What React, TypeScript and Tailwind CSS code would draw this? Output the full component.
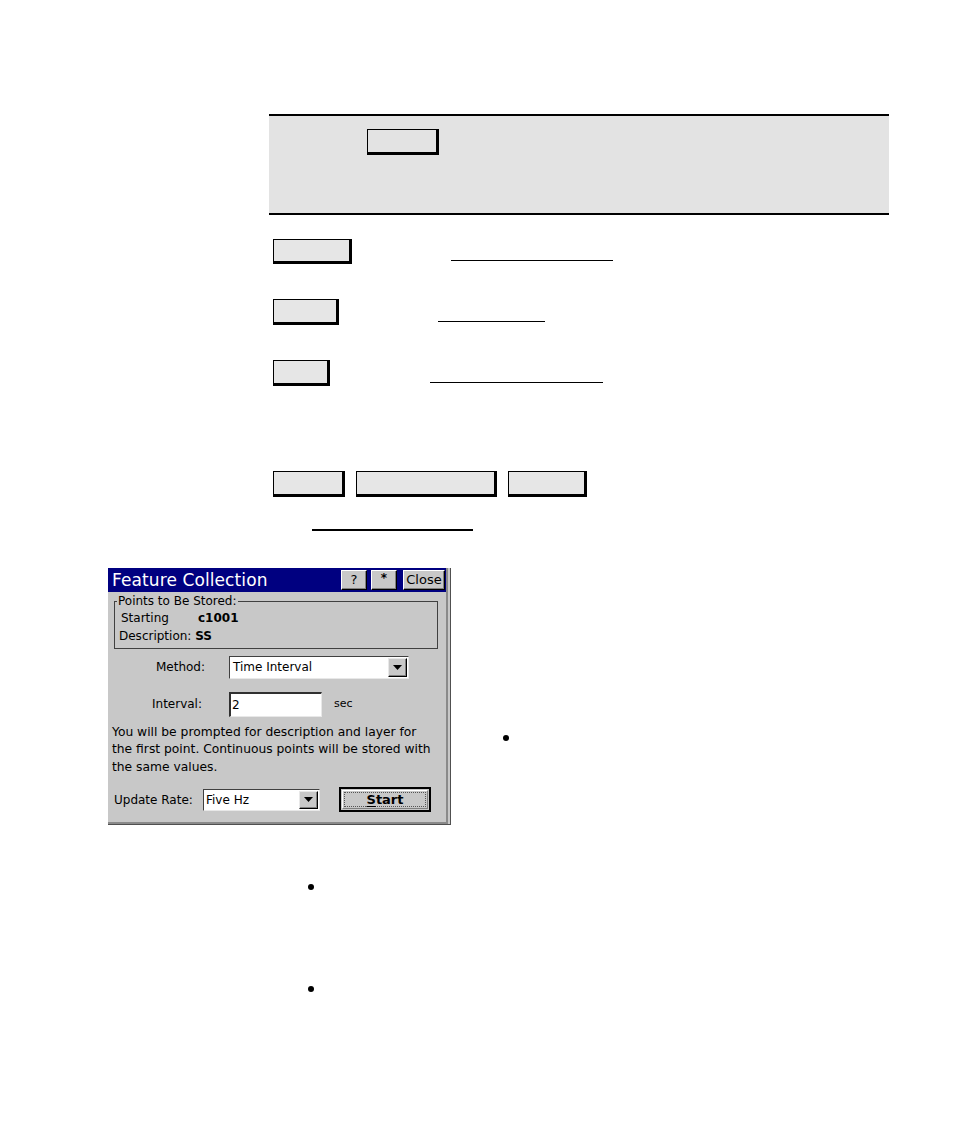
import React from "react";

const ui = { fontFamily: '"DejaVu Sans", Verdana, sans-serif' };

function DropBtn() {
  return (
    <div className="h-full w-[19px] bg-[#c8c8c8] border-t border-l border-t-[#e8e8e8] border-l-[#e8e8e8] border-r border-b border-r-black border-b-black shadow-[inset_-1px_-1px_0_#808080] flex items-center justify-center">
      <svg width="9" height="5" viewBox="0 0 9 5">
        <polygon points="0,0 9,0 4.5,5" fill="#000" />
      </svg>
    </div>
  );
}

function TitleBtn({ children, w }: { children: React.ReactNode; w: string }) {
  return (
    <div
      className={
        "h-[20px] bg-[#c8c8c8] border-t border-l border-t-white border-l-white border-r border-b border-r-black border-b-black shadow-[inset_-1px_-1px_0_#808080] flex items-center justify-center text-[13px] text-black " +
        w
      }
    >
      {children}
    </div>
  );
}

export default function App() {
  return (
    <div className="w-[954px] h-[1144px] bg-white overflow-hidden" style={ui}>
      <div className="pt-[114px]">
        {/* Note box */}
        <div className="ml-[269px] w-[620px] h-[101px] border-y-2 border-black bg-[#e3e3e3] pt-[13px] pl-[98px]">
          <div className="w-[72px] h-[26px] bg-[#e3e3e3] border-l border-t border-black border-r-[3px] border-b-[3px]" />
        </div>

        {/* Row 1 */}
        <div className="flex items-end mt-[24px] ml-[273px]">
          <div className="w-[79px] h-[25px] bg-[#e6e6e6] border-l border-t border-black border-r-[3px] border-b-[3px]" />
          <div className="ml-[99px] mb-[3px] w-[162px] h-[1.5px] bg-black" />
        </div>

        {/* Row 2 */}
        <div className="flex items-end mt-[35px] ml-[273px]">
          <div className="w-[66px] h-[26px] bg-[#e6e6e6] border-l border-t border-black border-r-[3px] border-b-[3px]" />
          <div className="ml-[99px] mb-[3px] w-[107px] h-[1.5px] bg-black" />
        </div>

        {/* Row 3 */}
        <div className="flex items-end mt-[35px] ml-[273px]">
          <div className="w-[57px] h-[26px] bg-[#e6e6e6] border-l border-t border-black border-r-[3px] border-b-[3px]" />
          <div className="ml-[100px] mb-[3px] w-[173px] h-[1.5px] bg-black" />
        </div>

        {/* Row 4 */}
        <div className="flex gap-[11px] mt-[85px] ml-[273px]">
          <div className="w-[72px] h-[26px] bg-[#e6e6e6] border-l border-t border-black border-r-[3px] border-b-[3px]" />
          <div className="w-[141px] h-[26px] bg-[#e6e6e6] border-l border-t border-black border-r-[3px] border-b-[3px]" />
          <div className="w-[79px] h-[26px] bg-[#e6e6e6] border-l border-t border-black border-r-[3px] border-b-[3px]" />
        </div>

        <div className="ml-[312px] mt-[32px] w-[161px] h-[1.5px] bg-black" />

        {/* Dialog + bullet */}
        <div className="flex items-start mt-[37px]">
          <div className="ml-[108px] w-[343px] h-[257px] border-r border-b border-[#505050] bg-[#c8c8c8]">
            <div className="h-full border-r-2 border-b-2 border-[#8a8a8a] mr-[2px] mb-[1px] flex flex-col">
              {/* Title bar */}
              <div className="h-[24px] bg-[#000080] flex items-center pl-[4px] pr-[1px] shrink-0">
                <div className="text-white text-[17px] leading-[20px] tracking-[0.1px] flex-1">Feature Collection</div>
                <TitleBtn w="w-[26px] mr-[4px]">?</TitleBtn>
                <TitleBtn w="w-[26px] mr-[6px]">
                  <span className="text-[12px] leading-[12px] font-bold -mt-[4px]">*</span>
                </TitleBtn>
                <TitleBtn w="w-[42px]">Close</TitleBtn>
              </div>

              {/* Group box */}
              <fieldset className="ml-[6px] mt-[2px] w-[324px] border border-[#404040] px-[4px] pb-[3px] text-[12px] text-black">
                <legend className="text-[12px] leading-[15px] px-[1px] -ml-[2px]">Points to Be Stored:</legend>
                <div className="flex h-[18px] items-center pl-[2px]">
                  <span className="w-[77px]">Starting</span>
                  <span className="font-bold">c1001</span>
                </div>
                <div className="flex h-[18px] items-center">
                  <span>Description:&nbsp;</span>
                  <span className="font-bold">SS</span>
                </div>
              </fieldset>

              {/* Method */}
              <div className="flex items-center mt-[7px] text-[12px] text-black">
                <div className="w-[97px] text-right">Method:</div>
                <div className="ml-[24px] w-[180px] h-[23px] bg-white border-t border-l border-t-[#404040] border-l-[#404040] border-r border-b border-r-[#e8e8e8] border-b-[#e8e8e8] flex items-stretch">
                  <div className="flex-1 pl-[3px] flex items-center">Time Interval</div>
                  <div className="p-[1px]">
                    <DropBtn />
                  </div>
                </div>
              </div>

              {/* Interval */}
              <div className="flex items-center mt-[13px] text-[12px] text-black">
                <div className="w-[94px] text-right">Interval:</div>
                <div className="ml-[27px] w-[93px] h-[25px] bg-white border-t-2 border-l-2 border-t-[#303030] border-l-[#303030] border-r border-b border-r-[#e8e8e8] border-b-[#e8e8e8] pl-[1px] flex items-center">
                  2
                </div>
                <div className="ml-[12px] text-[11px]">sec</div>
              </div>

              {/* Paragraph */}
              <div className="mt-[7px] pl-[4px] text-[12.3px] leading-[17.5px] text-black whitespace-nowrap">
                You will be prompted for description and layer for
                <br />
                the first point. Continuous points will be stored with
                <br />
                the same values.
              </div>

              {/* Update rate */}
              <div className="flex items-center mt-[11px] pl-[6px] text-[12px] text-black">
                <div className="w-[89px]">Update Rate:</div>
                <div className="w-[117px] h-[22px] bg-white border-t border-l border-t-[#404040] border-l-[#404040] border-r border-b border-r-[#e8e8e8] border-b-[#e8e8e8] flex items-stretch">
                  <div className="flex-1 pl-[2px] flex items-center">Five Hz</div>
                  <div className="p-[1px]">
                    <DropBtn />
                  </div>
                </div>
                <div className="ml-[19px] w-[92px] h-[25px] border-2 border-black bg-[#c8c8c8] p-[1px]">
                  <div className="h-full border-t border-l border-t-white border-l-white border-r border-b border-r-[#808080] border-b-[#808080] p-[1px]">
                    <div className="h-full border border-dotted border-[#555] flex items-center justify-center font-bold text-[13px]">
                      <span>
                        <span className="underline underline-offset-2">S</span>tart
                      </span>
                    </div>
                  </div>
                </div>
              </div>
            </div>
          </div>
          <div className="ml-[52px] mt-[167px] w-[6px] h-[6px] rounded-full bg-black" />
        </div>

        <div className="ml-[308px] mt-[59px] w-[6px] h-[6px] rounded-full bg-black" />
        <div className="ml-[308px] mt-[96px] w-[6px] h-[6px] rounded-full bg-black" />
      </div>
    </div>
  );
}
